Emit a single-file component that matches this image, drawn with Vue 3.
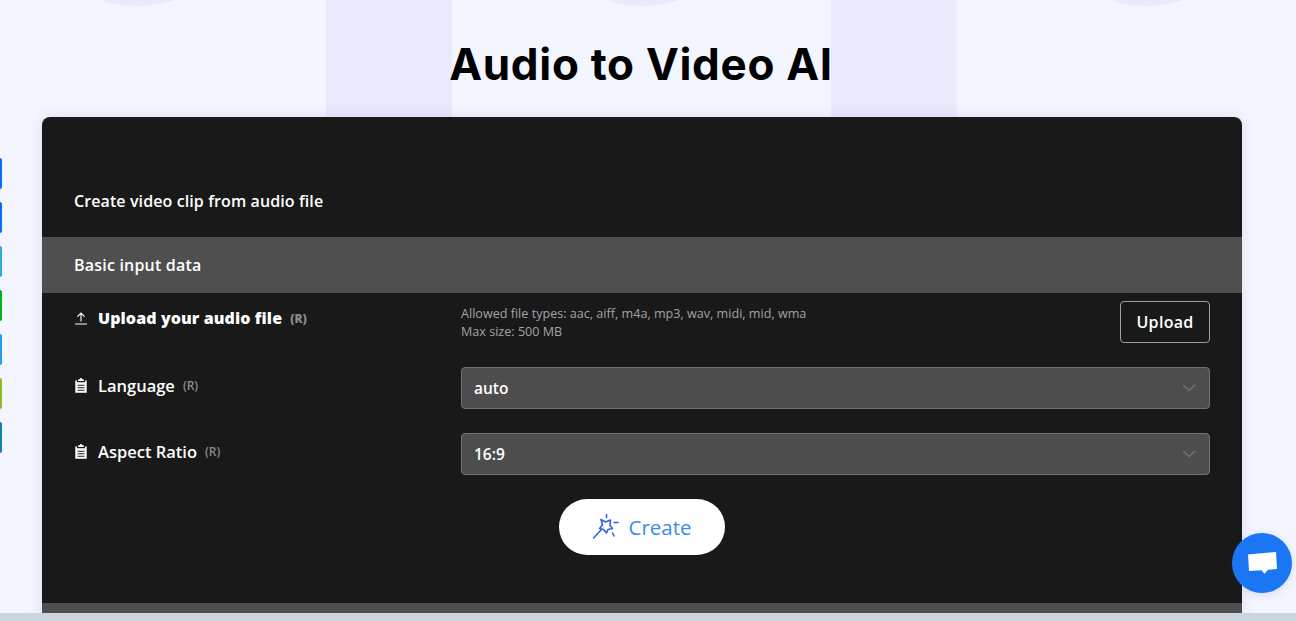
<template>
  <div class="page">
    <!-- background decoration -->
    <div class="deco">
      <span class="stripe" v-for="x in stripes" :key="x" :style="{ left: x + 'px' }"></span>
      <span class="blob" v-for="x in blobs" :key="x" :style="{ left: x + 'px' }"></span>
    </div>

    <div class="share-tabs">
      <span v-for="c in shareColors" :key="c" class="tab" :style="{ background: c }"></span>
    </div>

    <h1 class="title">Audio to Video AI</h1>

    <section class="card">
      <div class="card-head">Create video clip from audio file</div>
      <div class="section-bar">Basic input data</div>

      <div class="form">
        <div class="row row-upload">
          <label class="label">
            <svg class="ico" viewBox="0 0 14 14" width="14" height="14">
              <path d="M1 13h12M7 10.500V2.200M3.400 5.600 7 2l3.600 3.600" fill="none" stroke="#fff" stroke-width="1.100" />
            </svg>
            <b>Upload your audio file</b>
            <span class="req bold">(R)</span>
          </label>
          <div class="hint">
            <div>Allowed file types: aac, aiff, m4a, mp3, wav, midi, mid, wma</div>
            <div>Max size: 500 MB</div>
          </div>
          <button class="upload-btn">Upload</button>
        </div>

        <div class="row" v-for="f in selects" :key="f.name">
          <label class="label">
            <svg class="ico" viewBox="1 0 12 14" width="14" height="16">
              <path fill="#fff" fill-rule="evenodd" d="M4.500 1H6a1 1 0 0 1 2 0h1.500v1.600h-5zM2 2.200h1.500v1.500h7V2.200H12V13H2zM4 5.800v1h6v-1zM4 8v1h6V8zM4 10.200v1h6v-1z" />
            </svg>
            <span>{{ f.name }}</span>
            <span class="req">(R)</span>
          </label>
          <div class="select">
            <span>{{ f.value }}</span>
            <svg viewBox="0 0 14 8" width="14" height="8">
              <path d="M1 1l6 5.500L13 1" fill="none" stroke="#6b7280" stroke-width="1.500" />
            </svg>
          </div>
        </div>

        <div class="actions">
          <button class="create-btn">
            <svg viewBox="0 0 28 28" width="28" height="28" fill="none" stroke="#2f63e0" stroke-width="1.600" stroke-linecap="round" stroke-linejoin="round">
              <path d="M9 6.500l4.500 2.500 5-2-.5 5.500 2.500 3-4.500 1-1.500 3.500-3-3.500-4-1 3-3.500z" />
              <path d="M9.500 16.500 1.500 25M14.500 1.500v3M22 9.500h4M20.500 20l1.500 3" />
            </svg>
            <span>Create</span>
          </button>
        </div>
      </div>

      <div class="section-bar next"></div>
    </section>

    <div class="chat">
      <svg viewBox="0 0 30 24" width="30" height="24">
        <path fill="#fff" d="M1 3.500 29 1l1 17-9 .8-3.500 4-3-3.500L2 20z" />
      </svg>
    </div>
    <div class="bottom-band"></div>
  </div>
</template>

<script setup>
const stripes = [326, 831]
const blobs = [17, 522, 1026]
const shareColors = ['#0a6cff', '#0a6cfe', '#29abdf', '#03b21a', '#1ea1f2', '#8cb82b', '#0e84ad']

const selects = [
  { name: 'Language', value: 'auto' },
  { name: 'Aspect Ratio', value: '16:9' }
]
</script>

<style>
html, body {
  margin: 0;
  height: 100%;
  overflow: hidden;
  background: #f3f6ff;
}
</style>

<style scoped>
.page {
  position: relative;
  height: 621px;
  overflow: hidden;
  background: #f3f6ff;
  font-family: "Open Sans", "Noto Sans", sans-serif;
  color: #fff;
}

.deco span {
  position: absolute;
  background: #e9eafc;
}

.stripe {
  top: 0;
  width: 126px;
  height: 130px;
}

.blob {
  top: -234px;
  width: 240px;
  height: 240px;
  border-radius: 50%;
}

.share-tabs {
  position: absolute;
  left: 0;
  top: 158px;
  display: flex;
  flex-direction: column;
  gap: 13px;
}

.tab {
  display: block;
  width: 2px;
  height: 31px;
  border-radius: 0 3px 3px 0;
}

.title {
  position: relative;
  margin: 0;
  padding: 38px 14px 0 0;
  height: 117px;
  box-sizing: border-box;
  text-align: center;
  font-family: Inter, sans-serif;
  font-size: 44px;
  line-height: 52px;
  font-weight: 700;
  letter-spacing: 0.7px;
  color: #000;
}

.card {
  position: relative;
  margin: 0 54px 0 42px;
  height: 600px;
  background: #191919;
  border-radius: 8px 8px 0 0;
  box-shadow: 0 0 14px rgba(60, 60, 120, 0.12);
  overflow: hidden;
}

.card-head {
  height: 120px;
  box-sizing: border-box;
  padding: 72px 32px 0;
  font-size: 16px;
  line-height: 24px;
  font-weight: 600;
  letter-spacing: 0.1px;
}

.section-bar {
  height: 56px;
  padding: 0 32px;
  background: #4f4f4f;
  font-size: 16px;
  font-weight: 600;
  line-height: 56px;
  letter-spacing: 0.2px;
}

.section-bar.next {
  margin-top: 48px;
}

.form {
  padding: 0 32px;
}

.row {
  display: grid;
  grid-template-columns: 387px 1fr;
  align-items: center;
  height: 42px;
  margin-top: 24px;
}

.row-upload {
  grid-template-columns: 387px 1fr 90px;
  align-items: start;
  margin-top: 8px;
  height: 42px;
}

.label {
  display: flex;
  align-items: center;
  gap: 10px;
  font-size: 16.500px;
  font-weight: 600;
  margin-top: -5px;
  white-space: nowrap;
}

.row-upload .label {
  margin-top: 6px;
}

.label b {
  font-size: 16px;
  font-weight: 800;
  letter-spacing: 0.1px;
}

.req {
  margin-left: -2px;
  font-size: 12px;
  color: #8a8a8a;
}

.req.bold {
  margin-left: -2px;
  font-weight: 800;
}

.hint {
  font-size: 12.600px;
  line-height: 18px;
  padding-top: 4px;
  color: #a3a3a3;
}

.upload-btn {
  width: 90px;
  height: 42px;
  padding: 0;
  border: 1px solid #a0a0a0;
  border-radius: 4px;
  background: #191919;
  color: #fff;
  font-family: inherit;
  font-size: 16px;
  font-weight: 600;
  letter-spacing: 0.3px;
}

.select {
  display: flex;
  align-items: center;
  justify-content: space-between;
  height: 42px;
  box-sizing: border-box;
  padding: 0 13px 0 12px;
  background: #4d4d4d;
  border: 1px solid #6b7280;
  border-radius: 4px;
  font-size: 15.500px;
  font-weight: 600;
}

.actions {
  display: flex;
  justify-content: center;
  margin-top: 24px;
}

.create-btn {
  display: flex;
  align-items: center;
  justify-content: center;
  gap: 8px;
  width: 166px;
  height: 56px;
  padding: 0;
  border: none;
  border-radius: 28px;
  background: #fff;
  color: #3b8bf0;
  font-family: inherit;
  font-size: 20.500px;
  font-weight: 500;
}

.chat {
  position: absolute;
  left: 1232px;
  top: 533px;
  width: 60px;
  height: 60px;
  border-radius: 50%;
  background: #1a76f5;
  display: flex;
  align-items: center;
  justify-content: center;
  box-shadow: 0 2px 8px rgba(60, 60, 120, 0.15);
}

.bottom-band {
  position: absolute;
  left: 0;
  right: 0;
  bottom: 0;
  height: 8px;
  background: #c9d6df;
}
</style>
